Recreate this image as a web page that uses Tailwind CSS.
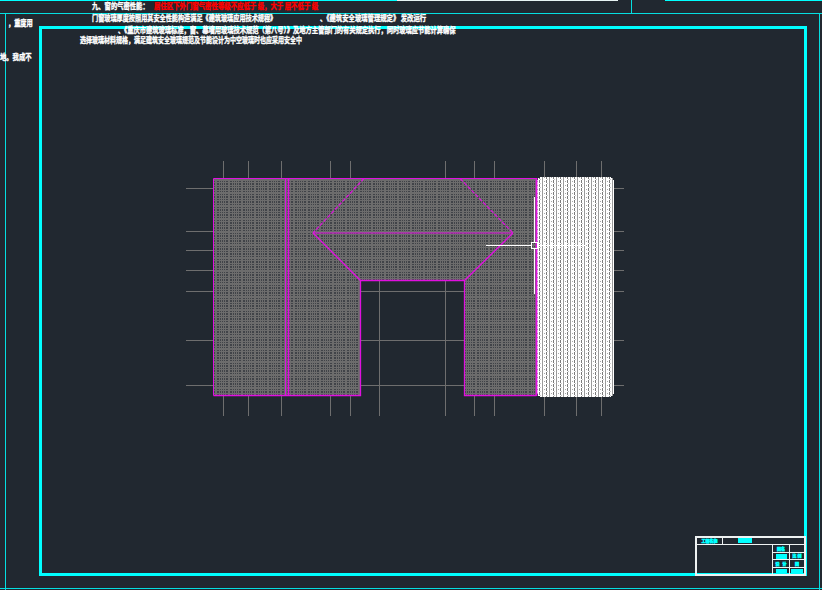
<!DOCTYPE html>
<html lang="zh">
<head>
<meta charset="UTF-8">
<title>CAD drawing</title>
<script src="https://cdn.jsdelivr.net/npm/@tailwindcss/browser@4"></script>
</head>
<body class="bg-[#212830]">
<div class="relative w-[822px] h-[590px] overflow-hidden bg-[#212830] font-['Noto_Sans_CJK_SC','Liberation_Sans',sans-serif]">

  <!-- model space: frames, hatch and dimension lines -->
  <svg class="absolute inset-0" width="822" height="590" viewBox="0 0 822 590" shape-rendering="crispEdges">
    <defs>
      <pattern id="hatch-gray" width="13" height="13" patternUnits="userSpaceOnUse">
        <rect width="13" height="13" fill="#404348"/>
        <path d="M0 0V13M2 0V13M4 0V13M7 0V13M8 0V13M11 0V13" transform="translate(.5 0)" stroke="#6c6c6c" fill="none"/>
        <path d="M0 0H13M2 0H13M0 3H13M0 5H13M0 8H13M0 10H13M0 11H13" transform="translate(0 .5)" stroke="#6c6c6c" fill="none"/>
      </pattern>
      <pattern id="hatch-white" width="7" height="4" patternUnits="userSpaceOnUse">
        <rect width="7" height="4" fill="#ffffff"/>
        <rect x="0" width="1" height="3" fill="#7a7a7a"/>
        <rect x="3" width="1" height="4" fill="#9a9a9a"/>
        <rect x="5" y="1" width="1" height="1" fill="#a8a8a8"/>
        <rect x="1" y="3" width="1" height="1" fill="#c8c8c8"/>
      </pattern>
    </defs>

    <!-- outer sheet lines -->
    <g fill="none" stroke="#00ffff">
      <path d="M0 .5H397"/>
      <path d="M665 .5H822"/>
      <path d="M0 13.5H822M5.5 13.5V590M819.5 13.5V590M0 588.5H822M631.5 0V13" stroke-opacity=".85"/>
    </g>
    <path d="M397 .5H618" stroke="#e8f4f4" fill="none"/>
    <rect x="40.5" y="27.5" width="765" height="547" fill="none" stroke="#00ffff" stroke-width="3"/>

    <!-- dimension lines -->
    <g stroke="#6e6e6e" fill="none">
      <path d="M223.5 161V416M248.5 161V416M281.5 161V416M330.5 161V416M350.5 161V416M379.5 280V416M445.5 161V416M474.5 161V416M494.5 161V416M544.5 161V416M576.5 161V416M601.5 161V416"/>
      <path d="M186 188.5H624M186 231.5H624M186 250.5H624M186 270.5H624M186 291.5H624M186 340.5H624M186 385.5H624"/>
    </g>

    <!-- hatched walls -->
    <path d="M213.5 178.5H536.5V395.5H464.5V280.5H360.5V395.5H213.5Z" fill="url(#hatch-gray)"/>
    <rect x="537" y="177" width="77" height="220" rx="5" fill="url(#hatch-white)"/>

    <!-- wall outlines -->
    <g fill="none" stroke="#e010e0" shape-rendering="auto">
      <path d="M213.5 395.5V178.5H536.5" stroke-width="1"/>
      <path d="M213.5 395.5H360.5V280.5H464.5V395.5H536.5" stroke-width="1.3"/>
      <path d="M285.5 178V396" stroke-width="1"/>
      <path d="M288.5 178V396" stroke-width="1.6"/>
      <path d="M313 233H513" stroke-width="1.2"/>
      <path d="M313 233L360.5 280.5M513 233L464.5 280.5" stroke-width="1.4"/>
      <path d="M364 178.5L313 233M460 178.5L513 233" stroke-width="1.2" stroke-dasharray="4 1.5"/>
      <path d="M536.5 178V396" stroke-width="1.8"/>
    </g>

    <!-- crosshair cursor -->
    <g fill="none" stroke="#ffffff">
      <path d="M486 245.5H531M537 245.5H585" />
      <path d="M534.5 197V242M534.5 248V294"/>
      <rect x="531.5" y="242.5" width="6" height="6"/>
    </g>
  </svg>

  <!-- notes from the drawing -->
  <div class="absolute left-[92px] top-0 origin-top-left scale-y-125 text-[6.3px] leading-[10px] font-bold text-white whitespace-nowrap [-webkit-text-stroke:0.3px_#ffffff]">九、窗的气密性能：</div>
  <div class="absolute left-[154px] top-0 origin-top-left scale-y-125 text-[6.4px] leading-[10px] font-bold text-[#ff0000] whitespace-nowrap [-webkit-text-stroke:0.3px_#ff0000]">居住区下外门窗气密性等级不应低于 级，大于 层不低于 级</div>
  <div class="absolute left-[92px] top-[12px] origin-top-left scale-y-125 text-[6.15px] leading-[10px] font-bold text-white whitespace-nowrap [-webkit-text-stroke:0.3px_#ffffff]">门窗玻璃厚度按照用其安全性能构造满足《建筑玻璃应用技术规程》</div>
  <div class="absolute left-[320px] top-[12px] origin-top-left scale-y-125 text-[6.35px] leading-[10px] font-bold text-white whitespace-nowrap [-webkit-text-stroke:0.3px_#ffffff]">、《建筑安全玻璃管理规定》 发改运行</div>
  <div class="absolute left-[118px] top-[24px] origin-top-left scale-y-125 text-[6.25px] leading-[10px] font-bold text-white whitespace-nowrap [-webkit-text-stroke:0.3px_#ffffff]">、《重庆市建筑玻璃标准，窗、幕墙用玻璃技术规范（第八号）》及地方主管部门的有关规定执行，同时玻璃应节能计算确保</div>
  <div class="absolute left-[80px] top-[34px] origin-top-left scale-y-125 text-[6px] leading-[10px] font-bold text-white whitespace-nowrap [-webkit-text-stroke:0.3px_#ffffff]">选择玻璃材料规格，满足建筑安全玻璃规范及节能设计为中空玻璃时也应采用安全中</div>
  <div class="absolute left-[8px] top-[17px] origin-top-left scale-y-125 text-[6.2px] leading-[10px] font-bold text-white whitespace-nowrap [-webkit-text-stroke:0.3px_#ffffff]">，重度用</div>
  <div class="absolute left-0 top-[51px] origin-top-left scale-y-125 text-[6.3px] leading-[10px] font-bold text-white whitespace-nowrap [-webkit-text-stroke:0.3px_#ffffff]">地。我成不</div>

  <!-- title block -->
  <div class="absolute left-[695px] top-[536px] w-[111px] h-[40px] border-2 border-[#eef2f2] flex flex-col text-[#00ffff] font-bold text-[4px] leading-none [-webkit-text-stroke:0.5px_#00ffff]">
    <div class="flex h-[7px] shrink-0 border-b border-[#eef2f2]">
      <div class="w-[26px] border-r border-[#eef2f2] flex items-center justify-center">工程名称</div>
      <div class="flex-1 pl-[15px]"><div class="w-[14px] h-[5px] bg-[#00ffff]"></div></div>
    </div>
    <div class="flex-1 flex">
      <div class="flex-1"></div>
      <div class="w-[17px] border-l border-[#eef2f2] flex flex-col">
        <div class="h-[8px] border-b border-[#eef2f2] flex items-center justify-center">图名</div>
        <div class="h-[7px] border-b border-[#eef2f2] flex items-center justify-center"><div class="w-[11px] h-[5px] bg-[#00ffff]"></div></div>
        <div class="h-[8px] border-b border-[#eef2f2] flex items-center justify-center gap-[3px]"><span>设</span><span>计</span></div>
        <div class="flex-1 flex items-center justify-center"><div class="w-[11px] h-[5px] bg-[#00ffff]"></div></div>
      </div>
      <div class="w-[15px] border-l border-[#eef2f2] flex flex-col">
        <div class="h-[8px] border-b border-[#eef2f2]"></div>
        <div class="h-[7px] border-b border-[#eef2f2] flex items-center justify-center gap-[1px]"><span>比</span><span>例</span></div>
        <div class="h-[8px] border-b border-[#eef2f2] flex items-center justify-center">图</div>
        <div class="flex-1 flex items-center justify-center"><div class="w-[12px] h-[5px] bg-[#00ffff]"></div></div>
      </div>
    </div>
  </div>
</div>
</body>
</html>
